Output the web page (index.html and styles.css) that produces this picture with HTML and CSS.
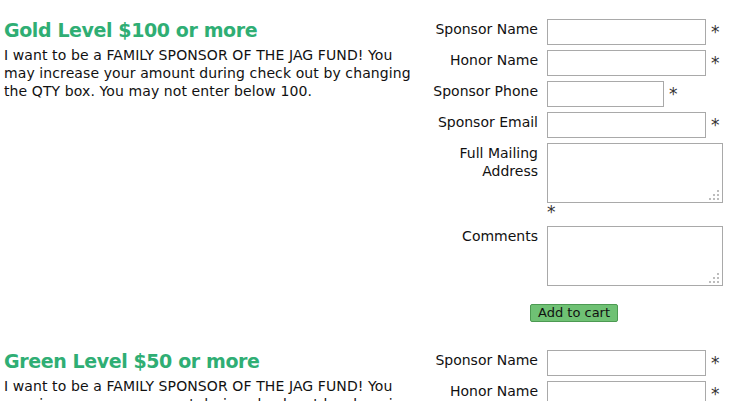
FILE: index.html
```html
<!DOCTYPE html>
<html>
<head>
  <title>Jag Fund Sponsors</title>
  <link rel="stylesheet" href="styles.css">
</head>
<body>

  <div class="product">
    <div class="desc">
      <h2>Gold Level $100 or more</h2>
      <p>I want to be a FAMILY SPONSOR OF THE JAG FUND! You may increase your amount during check out by changing the QTY box. You may not enter below 100.</p>
    </div>
    <form class="order">
      <label>Sponsor Name</label>
      <div class="field"><input type="text" class="wide"><span class="req">*</span></div>
      <label>Honor Name</label>
      <div class="field"><input type="text" class="wide"><span class="req">*</span></div>
      <label>Sponsor Phone</label>
      <div class="field"><input type="text" class="short"><span class="req">*</span></div>
      <label>Sponsor Email</label>
      <div class="field"><input type="text" class="wide"><span class="req">*</span></div>
      <label>Full Mailing Address</label>
      <div class="field stack"><textarea></textarea><span class="req">*</span></div>
      <label>Comments</label>
      <div class="field"><textarea></textarea></div>
      <div class="button-row"><button type="button">Add to cart</button></div>
    </form>
  </div>

  <div class="product">
    <div class="desc">
      <h2>Green Level $50 or more</h2>
      <p>I want to be a FAMILY SPONSOR OF THE JAG FUND! You may increase your amount during check out by changing the QTY box. You may not enter below 50.</p>
    </div>
    <form class="order">
      <label>Sponsor Name</label>
      <div class="field"><input type="text" class="wide"><span class="req">*</span></div>
      <label>Honor Name</label>
      <div class="field"><input type="text" class="wide"><span class="req">*</span></div>
      <label>Sponsor Phone</label>
      <div class="field"><input type="text" class="short"><span class="req">*</span></div>
      <label>Sponsor Email</label>
      <div class="field"><input type="text" class="wide"><span class="req">*</span></div>
    </form>
  </div>

</body>
</html>
```

FILE: styles.css
```css
body {
  font-family: "DejaVu Sans", Verdana, sans-serif;
  font-size: 14px;
  color: #111;
  margin: 0;
  padding: 0 4px;
  background: white;
}

.product {
  display: flex;
  padding-top: 18px;
  height: 313px;
}

.desc {
  width: 412px;
}

.desc h2 {
  margin: 0;
  font-size: 19px;
  font-weight: bold;
  letter-spacing: -0.4px;
  line-height: 24px;
  color: #2fae74;
}

.desc p {
  margin: 4px 0 0 0;
  line-height: 18px;
  letter-spacing: 0.1px;
}

.order {
  display: grid;
  grid-template-columns: 122px auto;
  column-gap: 9px;
  row-gap: 5px;
  align-content: start;
  margin-top: 1px;
}

.order label {
  text-align: right;
  line-height: 18px;
  padding-top: 1px;
}

.field {
  display: flex;
  align-items: center;
}

.field.stack {
  flex-direction: column;
  align-items: flex-start;
}

.field.stack .req {
  margin: 0;
  line-height: 18px;
  height: 18px;
}

input, textarea {
  box-sizing: border-box;
  border: 1px solid #a9a9a9;
  height: 26px;
  margin: 0;
  font-family: inherit;
  font-size: 13px;
}

input.wide {
  width: 159px;
}

input.short {
  width: 117px;
}

textarea {
  width: 176px;
  height: 60px;
  resize: none;
  background: white url("data:image/svg+xml,%3Csvg xmlns='http://www.w3.org/2000/svg' width='11' height='11'%3E%3Cg fill='%23bdbdbd'%3E%3Crect x='8' y='0' width='2' height='2'/%3E%3Crect x='4' y='4' width='2' height='2'/%3E%3Crect x='8' y='4' width='2' height='2'/%3E%3Crect x='0' y='8' width='2' height='2'/%3E%3Crect x='4' y='8' width='2' height='2'/%3E%3Crect x='8' y='8' width='2' height='2'/%3E%3C/g%3E%3C/svg%3E") no-repeat right 2px bottom 1px;
}

.req {
  margin-left: 5px;
  font-size: 17px;
  line-height: 1;
  color: #333;
}

.button-row {
  grid-column: 1 / 3;
  padding: 13px 0 0 114px;
}

.button-row button {
  font-family: inherit;
  font-size: 13px;
  color: #111;
  background: #6fc174;
  border: 1px solid #4c9a52;
  border-radius: 2px;
  padding: 0 7px;
  height: 18px;
  line-height: 16px;
}
```
